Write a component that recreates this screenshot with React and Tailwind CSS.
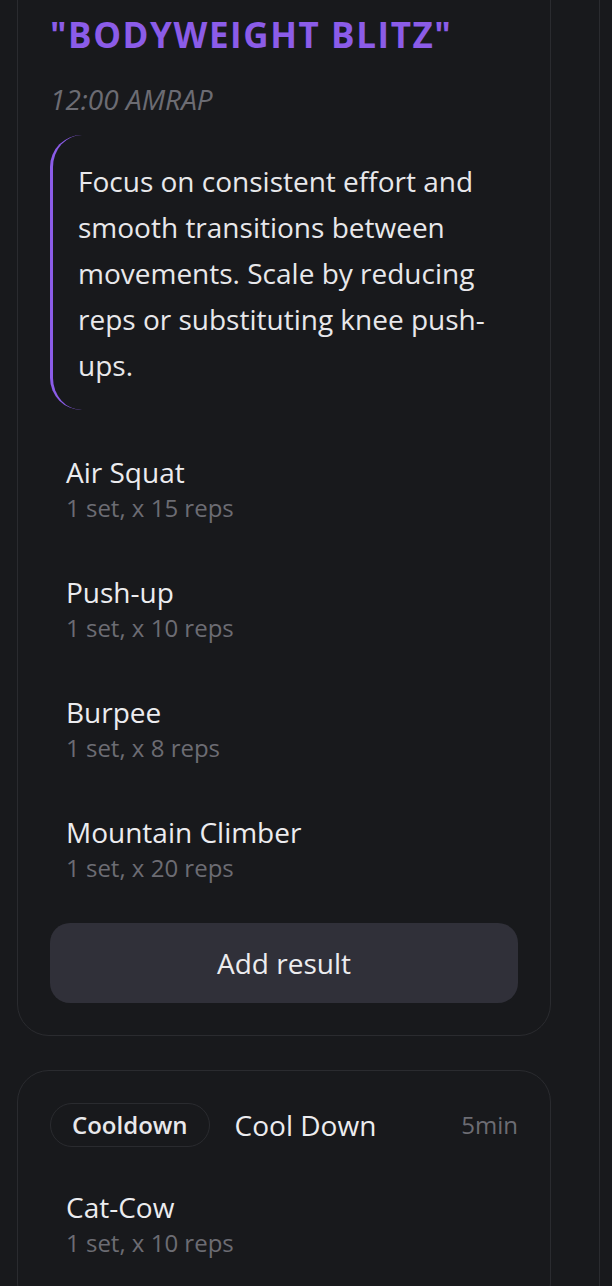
import React from "react";

const exercises = [
  { name: "Air Squat", detail: "1 set, x 15 reps" },
  { name: "Push-up", detail: "1 set, x 10 reps" },
  { name: "Burpee", detail: "1 set, x 8 reps" },
  { name: "Mountain Climber", detail: "1 set, x 20 reps" },
];

function ExerciseRow({ name, detail }) {
  return (
    <div className="px-4 pb-[23px] pt-[27px]">
      <div className="text-[28px] leading-[36px] text-[#ececef]">{name}</div>
      <div className="mt-[2px] text-[24px] leading-[32px] text-[#6c6c73]">{detail}</div>
    </div>
  );
}

export default function App() {
  return (
    <div className="min-h-screen overflow-hidden bg-[#18191c] font-['Open_Sans',sans-serif]">
      <div className="-mt-[60px] flex gap-[48px] pl-[17px]">
        <div className="flex w-[534px] shrink-0 flex-col gap-[34px]">
          {/* Workout card */}
          <div className="rounded-[32px] border border-[#2a2b2f] px-8 pb-8 pt-[74px]">
            <h1 className="text-[35px] font-bold leading-[40px] tracking-[0.045em] text-[#8b5ce8]">
              "BODYWEIGHT BLITZ"
            </h1>
            <div className="mt-[26px] text-[28px] italic leading-[36px] text-[#6c6c73]">
              12:00 AMRAP
            </div>
            <blockquote className="mt-[18px] rounded-l-[32px] border-l-[3px] border-[#8b5ce8] pb-[22px] pl-[25px] pt-[23px] text-[28px] leading-[46px] text-[#e8e8eb]">
              Focus on consistent effort and smooth transitions between
              movements. Scale by reducing reps or substituting knee push-ups.
            </blockquote>
            <div className="mt-[17px]">
              {exercises.map((e) => (
                <ExerciseRow key={e.name} {...e} />
              ))}
            </div>
            <button className="mt-4 flex h-[80px] w-full items-center justify-center rounded-[20px] bg-[#303039] text-[28px] text-[#ececef]">
              Add result
            </button>
          </div>

          {/* Cooldown card */}
          <div className="rounded-[32px] border border-[#2a2b2f] px-8 pb-8 pt-8">
            <div className="flex h-[44px] items-center">
              <span className="flex h-[44px] items-center rounded-full border border-[#2a2b2f] px-[21px] text-[24px] font-semibold text-[#e8e8eb]">
                Cooldown
              </span>
              <span className="ml-[25px] text-[28px] text-[#ececef]">Cool Down</span>
              <span className="ml-auto text-[24px] text-[#6c6c73]">5min</span>
            </div>
            <div className="mt-[15px]">
              <ExerciseRow name="Cat-Cow" detail="1 set, x 10 reps" />
            </div>
          </div>
        </div>

        {/* Next column peeking in */}
        <div className="w-[534px] shrink-0">
          <div className="h-[1500px] rounded-[32px] border border-[#2a2b2f]" />
        </div>
      </div>
    </div>
  );
}
